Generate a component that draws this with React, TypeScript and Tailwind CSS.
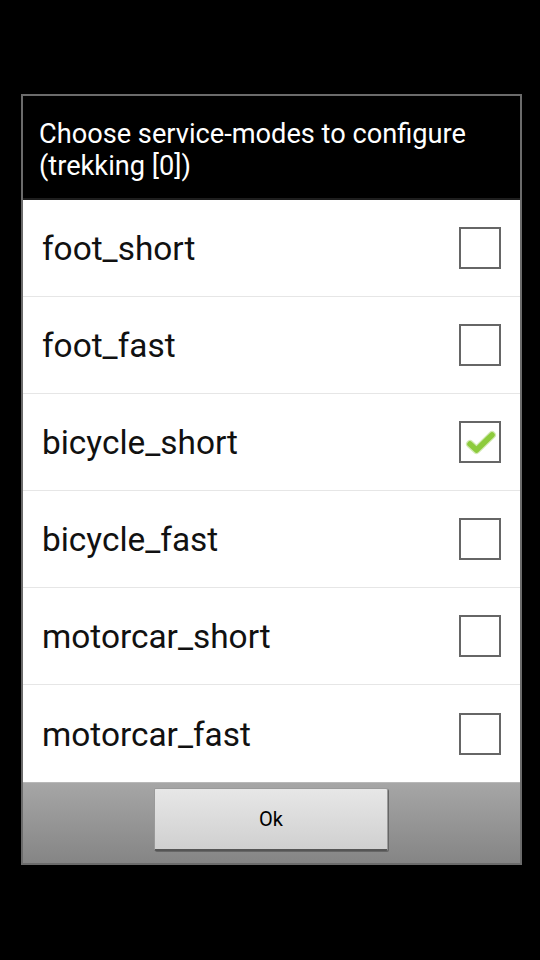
import React from "react";

const items = [
  { label: "foot_short", checked: false },
  { label: "foot_fast", checked: false },
  { label: "bicycle_short", checked: true },
  { label: "bicycle_fast", checked: false },
  { label: "motorcar_short", checked: false },
  { label: "motorcar_fast", checked: false },
];

function Check() {
  return (
    <svg width="34" height="34" viewBox="0 0 34 34" className="absolute left-[2px] top-[2px]">
      <path
        d="M7 19 L13.5 25 L29 10"
        fill="none"
        stroke="#d3eab4"
        strokeWidth="8"
        strokeLinecap="round"
        strokeLinejoin="round"
      />
      <path
        d="M7 19 L13.5 25 L29 10"
        fill="none"
        stroke="#8dcb3c"
        strokeWidth="5.5"
        strokeLinecap="round"
        strokeLinejoin="round"
      />
    </svg>
  );
}

export default function App() {
  return (
    <div
      className="w-[540px] h-[960px] bg-black pt-[94px] pl-[21px]"
      style={{ fontFamily: "Roboto, 'Noto Sans', sans-serif" }}
    >
      <div className="w-[501px] h-[771px] border-2 border-[#6b6b6b] flex flex-col bg-black">
        <div className="h-[104px] shrink-0 pl-[16px] pt-[22px] text-white text-[27.2px] leading-[32px] border-b-2 border-[#1e1e1e]">
          Choose service-modes to configure
          <br />
          (trekking [0])
        </div>
        <div className="bg-white flex flex-col">
          {items.map((it, i) => (
            <div
              key={it.label}
              className={
                "h-[97px] flex items-center justify-between pl-[19px] pr-[19px] " +
                (i < items.length - 1 ? "border-b border-[#e6e6e6]" : "")
              }
            >
              <span className="text-[33.4px] text-[#111] pt-[3px]">{it.label}</span>
              <div className="relative w-[42px] h-[42px] border-2 border-[#666]">
                {it.checked && <Check />}
              </div>
            </div>
          ))}
        </div>
        <div className="flex-1 bg-gradient-to-b from-[#a6a6a6] to-[#858585] border-t border-[#b8b8b8] flex justify-center pt-[5px] pr-[1px]">
          <div className="w-[234px] h-[63px] rounded-[2px] bg-gradient-to-b from-[#e7e7e7] to-[#d0d0d0] border border-[#9a9a9a] border-b-2 border-b-[#555] shadow-[1px_1px_0_#666] flex items-center justify-center text-[20px] text-black">
            Ok
          </div>
        </div>
      </div>
    </div>
  );
}
